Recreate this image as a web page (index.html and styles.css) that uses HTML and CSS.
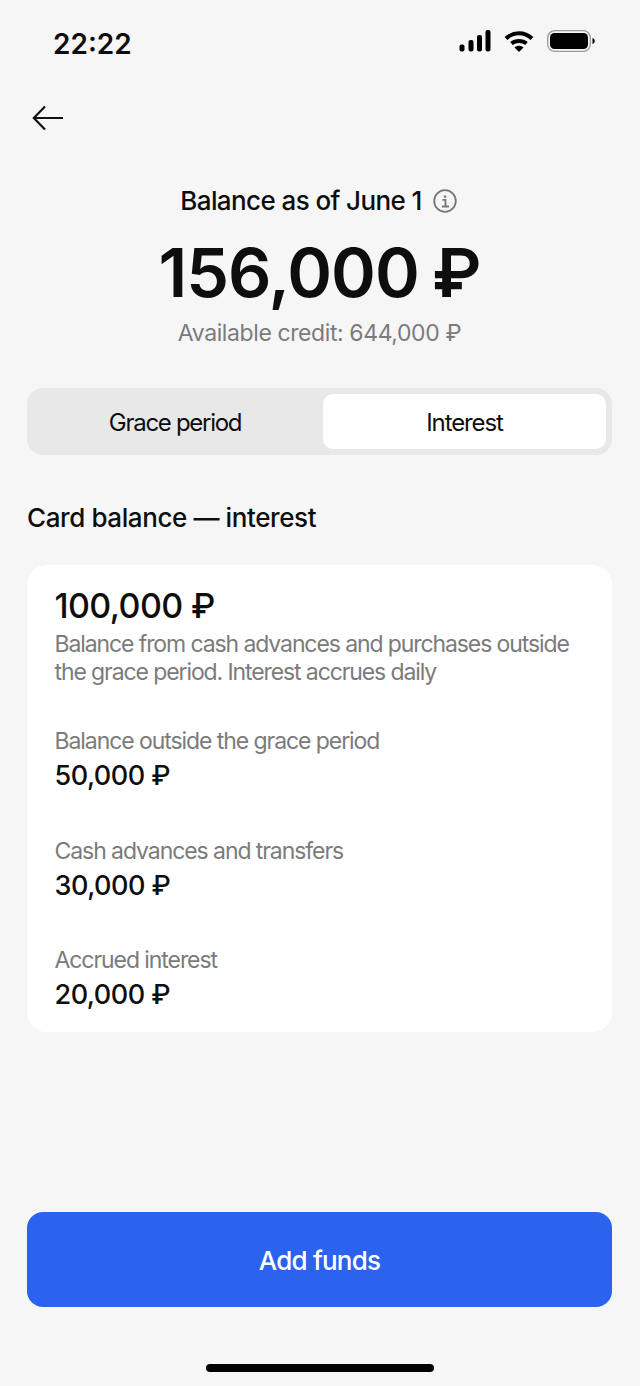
FILE: index.html
```html
<!DOCTYPE html>
<html lang="en">
<head>
<meta charset="utf-8">
<title>Balance</title>
<link rel="stylesheet" href="styles.css">
</head>
<body>
<div class="screen">
  <header class="status">
    <span class="time">22:22</span>
    <div class="status-icons">
      <svg class="i-signal" width="32" height="22" viewBox="0 0 32 22"><rect x="0.500" y="14.500" width="5" height="7" rx="2"/><rect x="9.500" y="10" width="5" height="11.500" rx="2"/><rect x="18" y="5" width="5" height="16.500" rx="2"/><rect x="26.500" y="0" width="5" height="21.500" rx="2"/></svg>
      <svg class="i-wifi" width="30" height="22" viewBox="0 0 30 22"><path d="M2 8.500C9.500 1.500 20.500 1.500 28 8.500" fill="none" stroke="#000" stroke-width="4"/><path d="M7.500 13.500C11.500 10 18.500 10 22.500 13.500" fill="none" stroke="#000" stroke-width="4"/><path d="M10.500 17.500C13 15 17 15 19.500 17.500L15 22Z"/></svg>
      <svg class="i-batt" width="48" height="22" viewBox="0 0 48 22"><rect x="0.700" y="0.700" width="42.600" height="20.600" rx="7" fill="none" stroke="#9a9a9a" stroke-width="1.300"/><rect x="3" y="3" width="38" height="16" rx="4.500"/><path d="M45.500 8v6c1.500-.5 2.200-1.800 2.200-3s-.7-2.500-2.200-3z"/></svg>
    </div>
  </header>

  <nav class="nav">
    <svg width="32" height="28" viewBox="0 0 32 28" fill="none" stroke="#111" stroke-width="2.200"><path d="M31 14H2M13 2.500 1.800 14 13 25.500"/></svg>
  </nav>

  <section class="summary">
    <div class="summary-title">
      <span>Balance as of June 1</span>
      <svg class="info" width="24" height="24" viewBox="0 0 24 24" fill="none" stroke="#777" stroke-width="1.800"><circle cx="12" cy="12" r="10.800"/><path d="M9.500 10.800h3v6.700M9 17.500h7"/><path d="M12 6.500v2.200" stroke-width="2.400"/></svg>
    </div>
    <div class="summary-amount">156,000 ₽</div>
    <div class="summary-credit">Available credit: 644,000 ₽</div>
  </section>

  <div class="tabs">
    <div class="tab tab-grace">Grace period</div>
    <div class="tab tab-active">Interest</div>
  </div>

  <h2 class="section-title">Card balance — interest</h2>

  <section class="card">
    <div class="card-head">
      <div class="card-total">100,000 ₽</div>
      <p class="card-desc">Balance from cash advances and purchases outside the grace period. Interest accrues daily</p>
    </div>
    <div class="row">
      <div class="row-label">Balance outside the grace period</div>
      <div class="row-value">50,000 ₽</div>
    </div>
    <div class="row">
      <div class="row-label">Cash advances and transfers</div>
      <div class="row-value">30,000 ₽</div>
    </div>
    <div class="row">
      <div class="row-label">Accrued interest</div>
      <div class="row-value">20,000 ₽</div>
    </div>
  </section>

  <footer class="footer">
    <button class="cta">Add funds</button>
    <div class="home-bar"></div>
  </footer>
</div>
</body>
</html>
```

FILE: styles.css
```css
* { box-sizing: border-box; }
html, body { margin: 0; height: 100%; }
body {
  background: #f6f6f6;
  color: #0e0e0e;
  font-family: Inter, "Liberation Sans", sans-serif;
}
.screen {
  height: 1386px;
  display: flex;
  flex-direction: column;
  padding: 0 28px 0 27px;
}
.status {
  height: 88px;
  display: flex;
  justify-content: space-between;
  align-items: center;
  padding: 0 17px 0 26px;
}
.time {
  font-size: 28px;
  line-height: 34px;
  font-weight: 600;
}
.status-icons {
  display: flex;
  align-items: center;
  gap: 13px;
  margin-bottom: 6px;
}
.nav {
  height: 60px;
  display: flex;
  align-items: center;
  padding-left: 5px;
}
.summary {
  display: flex;
  flex-direction: column;
  align-items: center;
  margin-top: 33px;
}
.summary-title {
  display: flex;
  align-items: center;
  gap: 11px;
  font-size: 26px;
  line-height: 40px;
  font-weight: 500;
  letter-spacing: -0.6px;
  padding-right: 2px;
}
.info { margin-top: -1px; }
.summary-amount {
  font-size: 68px;
  line-height: 80px;
  font-weight: 600;
  letter-spacing: -1px;
  word-spacing: -3px;
  margin-top: 11px;
}
.summary-credit {
  font-size: 23px;
  line-height: 34px;
  letter-spacing: -0.4px;
  color: #7b7b7b;
  margin-top: 4px;
}
.tabs {
  margin-top: 38px;
  height: 67px;
  padding: 6px 6px 6px 0;
  background: #e8e8e8;
  border-radius: 16px;
  display: grid;
  grid-template-columns: 1fr 283px;
}
.tab {
  display: flex;
  align-items: center;
  justify-content: center;
  font-size: 24px;
  font-weight: 400;
  letter-spacing: -1.1px;
  border-radius: 10px;
  padding-top: 1px;
}
.tab-grace { letter-spacing: -1.3px; }
.tab-active { background: #fff; }
.section-title {
  margin: 44px 0 28px;
  font-size: 26px;
  line-height: 38px;
  font-weight: 500;
  letter-spacing: -0.4px;
}
.card {
  background: #fff;
  border-radius: 20px;
  padding: 19px 28px 19px 27.5px;
  display: flex;
  flex-direction: column;
  gap: 40.5px;
}
.card-head { margin-bottom: -1.5px; }
.card-total {
  font-size: 34px;
  line-height: 44px;
  font-weight: 500;
  letter-spacing: -0.6px;
  margin-bottom: 2px;
}
.card-desc {
  margin: 0;
  font-size: 23px;
  line-height: 28px;
  color: #7b7b7b;
  letter-spacing: -1.1px;
}
.row-label {
  font-size: 23px;
  line-height: 32px;
  color: #7b7b7b;
  letter-spacing: -1.07px;
}
.row-value {
  font-size: 27px;
  line-height: 37px;
  font-weight: 500;
  letter-spacing: -0.5px;
}
.footer {
  margin-top: auto;
  display: flex;
  flex-direction: column;
  align-items: center;
  padding-bottom: 14px;
}
.cta {
  width: 100%;
  height: 95px;
  border: 0;
  border-radius: 16px;
  background: #2b63ee;
  color: #fff;
  font: 500 26px/1 Inter, "Liberation Sans", sans-serif;
  letter-spacing: -0.8px;
  padding-top: 4px;
}
.home-bar {
  width: 228px;
  height: 8px;
  border-radius: 4px;
  background: #000;
  margin-top: 57px;
}
```
